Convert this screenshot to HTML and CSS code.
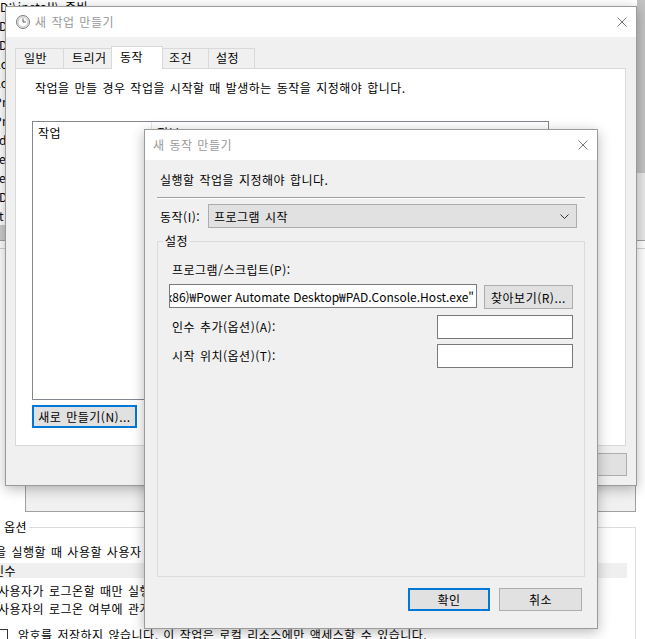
FILE: index.html
```html
<!DOCTYPE html>
<html lang="ko">
<head>
    <meta charset="UTF-8">
    <title>새 동작 만들기</title>
    <link rel="stylesheet" href="styles.css">
</head>
<body>

<div class="desk">
    <!-- Task Scheduler main window (behind) -->
    <div class="bg-window">
        <div class="bg-rows">
            <div class="bg-row"><span class="bg-path">D:\install\</span><span class="bg-state">준비</span></div>
            <div class="bg-row cut">D:\</div>
            <div class="bg-row cut">D:\</div>
            <div class="bg-row cut2">Log</div>
            <div class="bg-row cut2">Log</div>
            <div class="bg-row cut2">Pro</div>
            <div class="bg-row cut2">Pro</div>
            <div class="bg-row cut">d</div>
            <div class="bg-row cut">eD</div>
            <div class="bg-row cut">eD</div>
            <div class="bg-row cut">D)</div>
            <div class="bg-row cut">t</div>
        </div>
        <div class="bg-hscroll"></div>
        <div class="bg-split"></div>
        <div class="bg-box"></div>
        <div class="bg-group">
            <div class="bg-group-title">보안 옵션</div>
            <div class="bg-line">작업을 실행할 때 사용할 사용자 계정:</div>
            <div class="bg-account">민수</div>
            <div class="bg-radio">사용자가 로그온할 때만 실행</div>
            <div class="bg-radio">사용자의 로그온 여부에 관계없이 실행</div>
            <div class="bg-check"><span class="checkbox"></span>암호를 저장하지 않습니다. 이 작업은 로컬 리소스에만 액세스할 수 있습니다.</div>
        </div>
        <div class="bg-vscroll"><div class="bg-thumb"></div></div>
    </div>

    <!-- 새 작업 만들기 -->
    <div class="window task-window">
        <div class="titlebar">
            <svg class="app-icon" width="14" height="14" viewBox="0 0 14 14">
                <circle cx="7" cy="7" r="6.5" fill="#e6e6e6" stroke="#7d7d7d"/>
                <circle cx="7" cy="7" r="4.8" fill="#fff" stroke="#b5b5b5" stroke-width="0.6"/>
                <path d="M7 3.4V7H9.8" fill="none" stroke="#555" stroke-width="1"/>
            </svg>
            <span class="title">새 작업 만들기</span>
            <svg class="close" width="10" height="10" viewBox="0 0 10 10"><path d="M0.5 0.5L9.5 9.5M9.5 0.5L0.5 9.5" stroke="#7a7a7a"/></svg>
        </div>
        <div class="task-body">
            <div class="tabs">
                <div class="tab t1">일반</div>
                <div class="tab t2">트리거</div>
                <div class="tab t3 active">동작</div>
                <div class="tab t4">조건</div>
                <div class="tab t5">설정</div>
            </div>
            <div class="tab-panel">
                <p class="hint">작업을 만들 경우 작업을 시작할 때 발생하는 동작을 지정해야 합니다.</p>
                <div class="listview">
                    <div class="list-header">
                        <div class="col col-action">작업</div>
                        <div class="col">정보</div>
                    </div>
                </div>
                <button class="btn default new-btn">새로 만들기(N)...</button>
            </div>
            <div class="task-buttons">
                <button class="btn">확인</button>
                <button class="btn">취소</button>
            </div>
        </div>
    </div>

    <!-- 새 동작 만들기 -->
    <div class="window action-window">
        <div class="titlebar">
            <span class="title">새 동작 만들기</span>
            <svg class="close" width="10" height="10" viewBox="0 0 10 10"><path d="M0.5 0.5L9.5 9.5M9.5 0.5L0.5 9.5" stroke="#7a7a7a"/></svg>
        </div>
        <div class="action-body">
            <div class="intro">실행할 작업을 지정해야 합니다.</div>
            <div class="separator"></div>
            <div class="combo-row">
                <span class="combo-label">동작(I):</span>
                <div class="combo">
                    <span>프로그램 시작</span>
                    <svg width="9" height="5" viewBox="0 0 9 5"><path d="M0.5 0.5L4.5 4.5L8.5 0.5" fill="none" stroke="#333"/></svg>
                </div>
            </div>
            <div class="group">
                <div class="group-title">설정</div>
                <div class="field-label">프로그램/스크립트(P):</div>
                <div class="path-row">
                    <div class="textbox path"><span>"C:₩Program Files (x86)₩Power Automate Desktop₩PAD.Console.Host.exe"</span></div>
                    <button class="btn browse">찾아보기(R)...</button>
                </div>
                <div class="opt-row first">
                    <span class="field-label">인수 추가(옵션)(A):</span>
                    <div class="textbox small"></div>
                </div>
                <div class="opt-row">
                    <span class="field-label">시작 위치(옵션)(T):</span>
                    <div class="textbox small"></div>
                </div>
            </div>
            <div class="action-buttons">
                <button class="btn default ok">확인</button>
                <button class="btn cancel">취소</button>
            </div>
        </div>
    </div>
</div>

</body>
</html>
```

FILE: styles.css
```css
body {
    margin: 0;
    font-family: "Noto Sans CJK KR", "Noto Sans", sans-serif;
    font-size: 12px;
    letter-spacing: 0.5px;
    word-spacing: 1px;
    color: #000;
    background: #fff;
}
.desk {
    position: relative;
    width: 645px;
    height: 639px;
    overflow: hidden;
    background: #fff;
}

/* background window */
.bg-window {
    position: absolute;
    left: 0;
    top: 0;
    width: 645px;
    height: 639px;
    background: #fff;
    overflow: hidden;
}
.bg-rows {
    margin-top: -3px;
}
.bg-row {
    height: 19px;
    line-height: 19px;
    white-space: nowrap;
}
.bg-row.cut {
    margin-left: -1px;
}
.bg-row.cut2 {
    margin-left: -6px;
}
.bg-state {
    margin-left: 4px;
}
.bg-path {
    display: inline-block;
    width: 61px;
}
.bg-hscroll {
    height: 15px;
    background: #cdcdcd;
}
.bg-split {
    height: 7px;
    border-top: 1px solid #a0a0a0;
    border-bottom: 1px solid #d4d4d4;
}
.bg-box {
    margin: 3px 9px 0 25px;
    height: 258px;
    border: 1px solid #a0a0a0;
    background: #f0f0f0;
}
.bg-group {
    margin: 15px 9px 0 -30px;
    height: 200px;
    border-top: 1px solid #dcdcdc;
    border-right: 1px solid #dcdcdc;
}
.bg-group-title {
    width: fit-content;
    margin: -9px 0 0 4px;
    padding: 0 2px;
    line-height: 16px;
    background: #fff;
}
.bg-line {
    margin-top: 9px;
    padding-left: 2px;
    line-height: 16px;
    white-space: nowrap;
}
.bg-account {
    margin: 3px 8px 0 0;
    padding-left: 23px;
    height: 15px;
    line-height: 15px;
    background: #efefef;
}
.bg-radio {
    margin-top: 5px;
    padding-left: 28px;
    line-height: 16px;
    white-space: nowrap;
}
.bg-radio + .bg-radio {
    margin-top: 2px;
}
.bg-check {
    display: flex;
    align-items: center;
    margin-top: 10px;
    padding-left: 25px;
    line-height: 16px;
    white-space: nowrap;
}
.checkbox {
    width: 11px;
    height: 11px;
    margin-right: 10px;
    border: 1px solid #333;
    background: #fff;
}
.bg-vscroll {
    position: absolute;
    right: 0;
    top: 0;
    width: 8px;
    height: 240px;
    background: #e8e8e8;
}
.bg-thumb {
    height: 173px;
    background: #c2c2c2;
}

/* windows */
.window {
    position: absolute;
    box-sizing: border-box;
    border: 1px solid #9a9a9a;
    background: #f0f0f0;
    box-shadow: 0 3px 12px rgba(0, 0, 0, 0.28);
}
.titlebar {
    display: flex;
    align-items: center;
    height: 30px;
    background: #fff;
}
.title {
    color: #999;
    line-height: 16px;
}
.close {
    margin-left: auto;
    margin-right: 9px;
}
.btn {
    box-sizing: border-box;
    height: 23px;
    padding: 0;
    font: inherit;
    letter-spacing: inherit;
    word-spacing: inherit;
    color: #000;
    background: #e1e1e1;
    border: 1px solid #adadad;
}
.btn.default {
    border: 2px solid #0078d7;
}
.textbox {
    box-sizing: border-box;
    height: 24px;
    background: #fff;
    border: 1px solid #7a7a7a;
}

/* 새 작업 만들기 */
.task-window {
    left: 5px;
    top: 6px;
    width: 632px;
    height: 480px;
}
.task-window .titlebar {
    padding-left: 10px;
}
.app-icon {
    margin-right: 5px;
}
.task-body {
    padding: 9px 10px 0 9px;
}
.tabs {
    display: flex;
    align-items: flex-end;
    height: 22px;
}
.tab {
    box-sizing: border-box;
    height: 20px;
    margin-left: -1px;
    padding-left: 8px;
    line-height: 18px;
    border: 1px solid #d9d9d9;
    border-bottom: none;
    background: #f0f0f0;
}
.tab.t1 { width: 49px; margin-left: 0; }
.tab.t2 { width: 49px; }
.tab.t3 { width: 52px; }
.tab.t4 { width: 47px; padding-left: 6px; }
.tab.t5 { width: 47px; padding-left: 7px; }
.tab.active {
    position: relative;
    z-index: 1;
    height: 23px;
    margin-bottom: -1px;
    padding-top: 1px;
    background: #fff;
}
.tab-panel {
    box-sizing: border-box;
    height: 378px;
    padding: 11px 0 0 16px;
    background: #fff;
    border: 1px solid #d9d9d9;
}
.hint {
    margin: 0;
    padding-left: 3px;
    line-height: 16px;
}
.listview {
    box-sizing: border-box;
    width: 517px;
    height: 279px;
    margin-top: 25px;
    border: 1px solid #828790;
    background: #fff;
}
.list-header {
    display: flex;
    height: 22px;
    line-height: 22px;
}
.col {
    padding-left: 5px;
}
.col-action {
    box-sizing: border-box;
    width: 119px;
    border-right: 1px solid #e5e5e5;
}
.new-btn {
    display: block;
    width: 105px;
    margin-top: 5px;
}
.task-buttons {
    display: flex;
    justify-content: flex-end;
    gap: 7px;
    margin: 7px -1px 0 0;
}
.task-buttons .btn {
    width: 88px;
}

/* 새 동작 만들기 */
.action-window {
    left: 144px;
    top: 129px;
    width: 454px;
    height: 500px;
}
.action-window .titlebar {
    padding-left: 8px;
}
.action-body {
    padding: 12px 12px 0;
}
.intro {
    padding-left: 3px;
    line-height: 16px;
}
.separator {
    margin-top: 9px;
    border-top: 1px solid #a0a0a0;
    border-bottom: 1px solid #fff;
}
.combo-row {
    display: flex;
    align-items: center;
    margin-top: 5px;
}
.combo-label {
    box-sizing: border-box;
    width: 51px;
    padding-left: 3px;
    white-space: nowrap;
}
.combo {
    box-sizing: border-box;
    display: flex;
    align-items: center;
    justify-content: space-between;
    width: 369px;
    height: 24px;
    padding: 0 7px 0 5px;
    background: #e1e1e1;
    border: 1px solid #adadad;
}
.group {
    box-sizing: border-box;
    height: 336px;
    margin-top: 13px;
    padding: 0 11px;
    border: 1px solid #dcdcdc;
}
.group-title {
    width: fit-content;
    margin: -9px 0 0 -6px;
    padding: 0 2px;
    line-height: 16px;
    background: #f0f0f0;
}
.field-label {
    padding-left: 3px;
    line-height: 16px;
}
.group > .field-label {
    margin-top: 13px;
}
.path-row {
    display: flex;
    align-items: flex-start;
    gap: 7px;
    margin-top: 6px;
}
.textbox.path {
    display: flex;
    justify-content: flex-end;
    align-items: center;
    width: 308px;
    padding: 0 2px 0 3px;
    overflow: hidden;
    white-space: nowrap;
    letter-spacing: 0;
    word-spacing: 0;
}
.browse {
    width: 89px;
    height: 24px;
    margin-top: 1px;
}
.opt-row {
    display: flex;
    justify-content: space-between;
    align-items: center;
    margin-top: 5px;
}
.opt-row.first {
    margin-top: 6px;
}
.textbox.small {
    width: 136px;
}
.action-buttons {
    display: flex;
    justify-content: flex-end;
    gap: 9px;
    margin-top: 11px;
    padding-right: 3px;
}
.btn.ok {
    width: 82px;
}
.btn.cancel {
    width: 83px;
}
```
